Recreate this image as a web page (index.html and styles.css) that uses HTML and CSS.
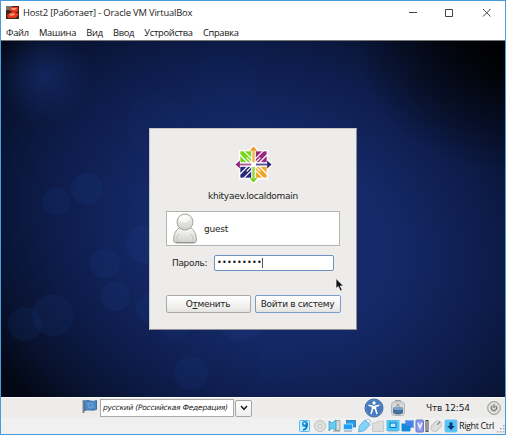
FILE: index.html
```html
<!DOCTYPE html>
<html lang="ru">
<head>
<meta charset="utf-8">
<title>Host2 [Работает] - Oracle VM VirtualBox</title>
<link rel="stylesheet" href="styles.css">
</head>
<body>
<div class="window">
  <header class="titlebar">
    <svg class="app-icon" viewBox="0 0 13 13"><rect width="13" height="13" fill="#40251f"/><rect width="6" height="4" fill="#747879"/><path d="M4 1h8v4L9 7h3v3l-3 2H2L1 9l3-2 3-1-3-1z" fill="#e63820"/><path d="M5 2h6L9 4H6zM3 8l5-1 1 2-4 1z" fill="#ff9773"/></svg>
    <h1 class="title">Host2 [Работает] - Oracle VM VirtualBox</h1>
    <svg class="controls" viewBox="0 0 84 12" fill="none" stroke="#444"><path d="M1 5.500h8M37.500 2.500h7v7h-7zM75 2l7.500 7.500M82.500 2L75 9.500"/></svg>
  </header>
  <nav class="menubar"><span>Файл</span><span>Машина</span><span>Вид</span><span>Ввод</span><span>Устройства</span><span>Справка</span></nav>
  <main class="desktop">
    <svg class="wallpaper" viewBox="0 0 504 357" preserveAspectRatio="none">
      <defs>
        <radialGradient id="sky" gradientUnits="userSpaceOnUse" cx="0" cy="0" r="1" gradientTransform="translate(270 195) rotate(20) scale(345 270)"><stop offset="0" stop-color="#192d74"/><stop offset=".38" stop-color="#152866"/><stop offset=".65" stop-color="#0d1c4b"/><stop offset=".87" stop-color="#08122e"/><stop offset="1" stop-color="#030815"/></radialGradient>
        <radialGradient id="glow"><stop offset="0" stop-color="#173075" stop-opacity=".6"/><stop offset="1" stop-color="#173075" stop-opacity="0"/></radialGradient>
        <radialGradient id="corner"><stop offset="0" stop-color="#000" stop-opacity=".95"/><stop offset=".35" stop-color="#000" stop-opacity=".6"/><stop offset="1" stop-color="#000" stop-opacity="0"/></radialGradient>
      </defs>
      <rect width="504" height="357" fill="url(#sky)"/>
      <ellipse cx="503" cy="0" rx="150" ry="130" fill="url(#corner)"/>
      <circle cx="43" cy="35" r="48" fill="url(#glow)"/>
      <g fill="#2448a0" fill-opacity=".12">
        <circle cx="86" cy="148" r="16"/><circle cx="55" cy="161" r="14"/><circle cx="104" cy="223" r="15"/><circle cx="114" cy="256" r="15"/><circle cx="52" cy="275" r="21"/><circle cx="24" cy="284" r="17"/><circle cx="144" cy="204" r="19"/><circle cx="150" cy="268" r="15"/><circle cx="173" cy="282" r="17" fill-opacity=".08"/><circle cx="240" cy="278" r="23"/><circle cx="190" cy="333" r="17"/><circle cx="276" cy="324" r="20" fill-opacity=".04"/><circle cx="223" cy="46" r="33" fill-opacity=".035"/><circle cx="155" cy="82" r="29" fill-opacity=".035"/>
      </g>
    </svg>
    <section class="dialog">
      <svg class="logo" viewBox="-20 -20 40 40">
        <path d="M0-20l5.500 5h9.500v9.500L20 0l-5 5.500v9.500H5.500L0 20l-5.500-5H-15V5.500L-20 0l5-5.500V-15h9.500z" fill="#fff"/>
        <path d="M-13.500-13.500h11.500v11.500h-11.500z" fill="#77d51b"/><path d="M2-13.500h11.500v11.500H2z" fill="#9b267f"/><path d="M-13.500 2h11.500v11.500h-11.500z" fill="#29277b"/><path d="M2 2h11.500v11.500H2z" fill="#f0a727"/>
        <path d="M-10-14l10 10 10-10M-10 14L0 4l10 10M-14-10L-4 0l-10 10M14-10L4 0l10 10M-7-7l7 7M7-7L-7 7M0 0l7 7" fill="none" stroke="#fff" stroke-width="1.300"/>
        <path d="M0-14V14M-14 0H14" stroke="#fff" stroke-width="4.500"/>
        <path d="M0-14V-2" stroke="#f4b653" stroke-width="2.500"/><path d="M0-18.500l4 4.500h-8z" fill="#f19a1e"/>
        <path d="M0 14V2" stroke="#8ed83e" stroke-width="2.500"/><path d="M0 18.500l4-4.500h-8z" fill="#72d11b"/>
        <path d="M-14 0h12" stroke="#b25c9c" stroke-width="2"/><path d="M-18.500 0l4.500-4v8z" fill="#8c2779"/>
        <path d="M14 0H2" stroke="#5c5798" stroke-width="2"/><path d="M18.500 0l-4.500-4v8z" fill="#292978"/><circle r="2.500" fill="#fff"/>
      </svg>
      <div class="host">khityaev.localdomain</div>
      <div class="user">
        <svg class="avatar" viewBox="0 0 26 31"><defs><linearGradient id="body" x2="0" y2="1"><stop stop-color="#f9f9f7"/><stop offset="1" stop-color="#cfcfcb"/></linearGradient></defs><path d="M7 15h12q5 3 5.500 12 0 3-3 3h-17q-3 0-3-3Q2 18 7 15z" fill="url(#body)" stroke="#a5a5a1"/><path d="M5 29v-5l2-3m14 8v-5l-2-3" fill="none" stroke="#c4c4c0"/><path d="M4 29.500h18" stroke="#90908d"/><circle cx="13" cy="9" r="8" fill="url(#body)" stroke="#a5a5a1"/><ellipse cx="12" cy="6" rx="5" ry="3.500" fill="#fff" opacity=".65"/></svg>
        <span>guest</span>
      </div>
      <div class="password"><span class="label">Пароль:</span><div class="entry"><span class="dots">•••••••••</span><i class="caret"></i></div></div>
      <div class="actions"><button class="btn"><span>О<u>т</u>менить</span></button><button class="btn primary"><span>Войти в систему</span></button></div>
    </section>
    <svg class="pointer" viewBox="0 0 9 14"><path d="M1 .5v10l2.300-2 2 4.500 2-.8-2-4.200H8.500z" fill="#111" stroke="#fff" stroke-width=".7"/></svg>
  </main>
  <div class="panel">
    <svg class="flag" viewBox="0 0 15 13"><path d="M1.500 0v13" stroke="#808584" stroke-width="2"/><path d="M2.500 1q3-1 6 0t6-.5v9q-3 1-6 .5t-6 .5z" fill="#4a87c7" stroke="#3a6ea9"/><circle cx="8.500" cy="5.500" r="2.500" fill="none" stroke="#8db6df" stroke-width=".7"/><path d="M4 3l9 5" stroke="#6c9dd0" stroke-width=".6"/></svg>
    <div class="language"><span>русский (Российская Федерация)</span></div>
    <div class="drop"><svg viewBox="0 0 8 6"><path d="M1 1l3 3.300L7 1" fill="none" stroke="#222" stroke-width="1.500"/></svg></div>
    <svg class="access" viewBox="0 0 20 20"><circle cx="10" cy="10" r="9" fill="#4579bd" stroke="#3061a3"/><circle cx="10" cy="10" r="8.200" fill="none" stroke="#6f98ca" stroke-width=".6"/><circle cx="10" cy="5" r="1.700" fill="#fff"/><path d="M4.500 7.300l4 .8v3L7 16M15.500 7.300l-4 .8v3L13 16M10 8v3" fill="none" stroke="#fff" stroke-width="1.600"/></svg>
    <svg class="battery" viewBox="0 0 14 16"><rect x="4" y=".5" width="6" height="3" rx="1" fill="#d8dad8" stroke="#989b99"/><rect x=".5" y="2" width="13" height="13.500" rx="3" fill="#d7dad9" stroke="#b5b8b7"/><path d="M2 8q5-2 10 0v5q-5 3-10 0z" fill="#466f9e"/><ellipse cx="7" cy="8.500" rx="5" ry="1.700" fill="#7da1c8"/><path d="M5.500 6.500L7 4l1.500 2.500" fill="none" stroke="#888"/></svg>
    <time class="clock"><span>Чтв 12:54</span></time>
    <svg class="power" viewBox="0 0 14 14"><circle cx="7" cy="7" r="6.300" fill="#d2d3d1" stroke="#8c8e8b"/><circle cx="7" cy="7" r="5" fill="none" stroke="#f1f1ef"/><path d="M5.200 5a2.700 2.700 0 1 0 3.600 0M7 3.500V7" fill="none" stroke="#626460"/></svg>
  </div>
  <footer class="status">
    <svg class="devices" viewBox="0 0 160 14">
      <g><rect x="1.500" y="1.500" width="10" height="11" rx="1" fill="#baf0ff" stroke="#62b9ed"/><circle cx="7" cy="5" r="3" fill="#198dd9"/><circle cx="6.500" cy="4.500" r="1" fill="#fff"/><path d="M9 6q0 4-4 5" fill="none" stroke="#1267b2" stroke-width="1.500"/></g>
      <g><circle cx="22" cy="7" r="5.700" fill="#dedede" stroke="#c8c8c8"/><circle cx="22" cy="7" r="1.600" fill="#f7f7f7" stroke="#b5b5b5" stroke-width=".7"/></g>
      <g><path d="M37 1.500h5v10h-5" fill="#d8dbdc" stroke="#a4aaad"/><path d="M31 2l3 2 4-3v10l-4-2-3 3z" fill="#69cdf0" stroke="#369dce" stroke-width=".8"/><path d="M35 12h7" stroke="#909699"/></g>
      <g><rect x="48.500" y="1.500" width="9" height="6.500" fill="#259bea" stroke="#146bae" stroke-width=".7"/><rect x="45.500" y="5" width="9" height="5.500" fill="#209ef4" stroke="#d8eef9" stroke-width=".7"/><path d="M46 12h8" stroke="#7896aa"/></g>
      <g transform="rotate(42 66 7)"><rect x="64" y="-1" width="4" height="3" fill="#fff" stroke="#65a9d3" stroke-width=".8"/><path d="M62.500 2h7v8L66 15l-3.500-5z" fill="#81d3fa" stroke="#68a8d3" stroke-width=".8"/></g>
      <path d="M74.500 4h4l1-2h6v10.500h-11z" fill="#dedede" stroke="#c9c9c9"/>
      <g><rect x="89" y="1.500" width="12" height="10" fill="#44c7fa" stroke="#59bce7"/><rect x="92" y="4" width="6" height="4.500" fill="#a6edff" stroke="#1470bc"/><path d="M90 12.700h10" stroke="#a7c5d4"/></g>
      <g><rect x="107.500" y="1.500" width="8" height="7" fill="#4783e6" stroke="#78aef1"/><path d="M103.500 4.500h4l1 2h4v5.500h-9z" fill="#1389dc"/><path d="M104 12.500h8" stroke="#83c9f7"/></g>
      <g><rect x="118" y="1" width="7.500" height="12" rx="1" fill="#929be8" stroke="#6677cd"/><path d="M120 4l1.900 5 1.900-5" fill="none" stroke="#fff" stroke-width="1.300"/></g>
      <rect x="128" y="1.500" width="2" height="11" fill="#e8e8e8" stroke="#333" stroke-width=".9"/>
      <g transform="rotate(43 138 7)"><rect x="134.500" y="1" width="7.500" height="12" rx="3.700" fill="#dedede" stroke="#c5c5c5"/><path d="M138 1v4" stroke="#777"/></g>
      <g><rect x="147" y="1" width="12" height="12" rx="1" fill="#55c3f5" stroke="#73c8ef"/><path d="M151.500 3.500h3V7h2.300L153 11l-3.800-4h2.300z" fill="#083875"/></g>
    </svg>
    <span class="hostkey">Right Ctrl</span>
    <svg class="grip" viewBox="0 0 8 8" fill="#aaa"><path d="M6 0h1.500v1.500H6zM3 3h1.500v1.500H3zM6 3h1.500v1.500H6zM0 6h1.500v1.500H0zM3 6h1.500v1.500H3zM6 6h1.500v1.500H6z"/></svg>
  </footer>
</div>
</body>
</html>
```
FILE: styles.css
```css
* { box-sizing: border-box; }
body { margin: 0; font-family: "Noto Sans", sans-serif; color: #222; overflow: hidden; }
svg { display: block; flex: none; }
.window { width: 506px; height: 435px; border: 1px solid #4a9ddd; display: flex; flex-direction: column; background: #fff; white-space: nowrap; }
.titlebar { height: 23px; display: flex; align-items: center; padding-left: 5px; flex: none; }
.app-icon { width: 13px; height: 13px; }
.title { margin: 0 0 0 4px; font: 400 9.400px/16px "Open Sans", sans-serif; color: #222; letter-spacing: -.17px; }
.controls { width: 84px; height: 12px; margin-left: auto; margin-right: 13px; }
.menubar { height: 17px; padding-left: 5px; display: flex; gap: 10.200px; font: 400 9.300px/17px "Open Sans", sans-serif; letter-spacing: -.27px; color: #111; flex: none; border-bottom: 1px solid #777; }
.desktop { height: 356px; position: relative; display: flex; justify-content: center; align-items: flex-start; padding-top: 87px; flex: none; background: #101f52; }
.wallpaper { position: absolute; inset: 0; width: 504px; height: 356px; }
.dialog { position: relative; width: 208px; height: 202px; background: #edeceb; border: 1px solid #c7c7c5; border-right-color: #8e8f93; border-bottom-color: #8e8f93; padding: 16px 16px 0 16px; font: 9px/14px "DejaVu Sans", sans-serif; display: flex; flex-direction: column; align-items: center; }
.logo { width: 39px; height: 39px; }
.host { margin-top: 5px; height: 14px; letter-spacing: -.28px; }
.user { width: 174px; height: 35px; margin-top: 8px; background: #fff; border: 1px solid #b3b3b0; display: flex; align-items: center; gap: 6px; padding-left: 5px; flex: none; letter-spacing: -.2px; }
.avatar { width: 26px; height: 31px; }
.password { display: flex; align-items: center; width: 174px; height: 16px; margin-top: 9px; flex: none; }
.label { width: 48px; padding-left: 6px; flex: none; letter-spacing: -.35px; }
.entry { width: 120px; height: 16px; background: #fff; border: 1px solid #6d91bf; border-radius: 2px; display: flex; align-items: center; padding-left: 2px; }
.dots { font-size: 8px; letter-spacing: .28px; color: #111; }
.caret { width: 1px; height: 10px; background: #555; }
.actions { display: flex; gap: 4px; width: 175px; margin-top: 24px; }
.btn { width: 85px; height: 18px; padding: 0; font: inherit; letter-spacing: -.31px; color: #222; background: linear-gradient(#fff, #eeedec 75%, #e2e2e0); border: 1px solid #a9a9a6; border-radius: 2px; display: flex; justify-content: center; align-items: center; white-space: nowrap; }
.primary { width: 86px; border-color: #7c9dc8; }
.pointer { position: absolute; left: 334px; top: 237px; width: 9px; height: 14px; }
.panel { height: 21px; background: #edeceb; border-top: 1px solid #faf9f8; display: flex; align-items: center; flex: none; padding-left: 81px; font-family: "DejaVu Sans", sans-serif; }
.flag { width: 15px; height: 13px; margin-top: -3px; }
.language { width: 134px; height: 18px; margin-left: 3px; border: 1px solid #aaa; background: #fff; padding-left: 2px; font-size: 7.500px; letter-spacing: -.24px; line-height: 16px; font-style: italic; }
.drop { width: 17px; height: 17px; margin-left: 1px; background: linear-gradient(#fff, #eee); border: 1px solid #a5a5a2; border-radius: 2px; display: grid; place-items: center; }
.drop svg { width: 8px; height: 6px; }
.access { width: 20px; height: 20px; margin-left: 112px; }
.battery { width: 14px; height: 16px; margin-left: 7px; }
.clock { margin-left: 21px; width: 46px; font-size: 9px; letter-spacing: -.2px; }
.power { width: 14px; height: 14px; margin-left: auto; margin-right: 4px; }
.status { height: 16px; background: #f0f0f0; display: flex; align-items: center; flex: none; padding-left: 297px; }
.devices { width: 160px; height: 14px; }
.hostkey { font: 400 9px/14px "Open Sans", sans-serif; letter-spacing: -.37px; color: #111; margin-left: 1px; }
.grip { width: 8px; height: 8px; margin-left: auto; margin-top: 5px; }
```
